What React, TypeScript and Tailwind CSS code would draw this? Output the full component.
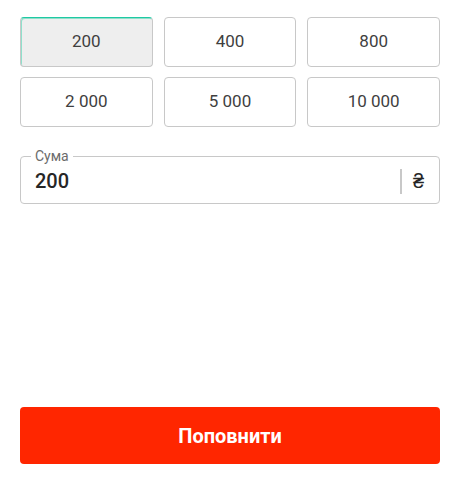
const amounts = ["200", "400", "800", "2 000", "5 000", "10 000"];

const App = () => {
  const selected = "200";
  return (
    <div
      className="w-[466px] h-[484px] bg-white"
      style={{ fontFamily: "Roboto, 'Liberation Sans', sans-serif" }}
    >
      <div className="ml-[20px] w-[420px] pt-[17px]">
        <div className="grid grid-cols-3 gap-x-[11px] gap-y-[10px]">
          {amounts.map((a) => (
            <button
              key={a}
              className={
                a === selected
                  ? "h-[50px] rounded-[4px] border border-[#c8c8c8] border-t-[#1fc9a3] shadow-[inset_1px_1px_0_#8fe0cc] bg-[#eeeeee] text-[17px] text-[#3f3f3f]"
                  : "h-[50px] rounded-[4px] border border-[#c8c8c8] bg-white text-[17px] text-[#3f3f3f]"
              }
            >
              {a}
            </button>
          ))}
        </div>

        <fieldset className="mt-[22px] h-[55px] rounded-[4px] border border-[#c8c8c8] px-[10px] flex items-start">
          <legend className="px-[4px] text-[14px] leading-[15px] text-[#6b6b6b]">Сума</legend>
          <div className="flex flex-1 items-center h-[40px] -mt-[3px]">
            <span className="flex-1 pl-[4px] text-[20px] font-medium text-[#262626]">200</span>
            <span className="h-[25px] w-[2px] bg-[#c8c8c8]" />
            <span className="ml-[11px] mr-[5px] text-[20px] font-medium text-[#262626]">₴</span>
          </div>
        </fieldset>

        <button className="mt-[203px] h-[57px] w-full rounded-[4px] bg-[#ff2600] text-[20px] font-bold text-white">
          Поповнити
        </button>
      </div>
    </div>
  );
};

export default App;
